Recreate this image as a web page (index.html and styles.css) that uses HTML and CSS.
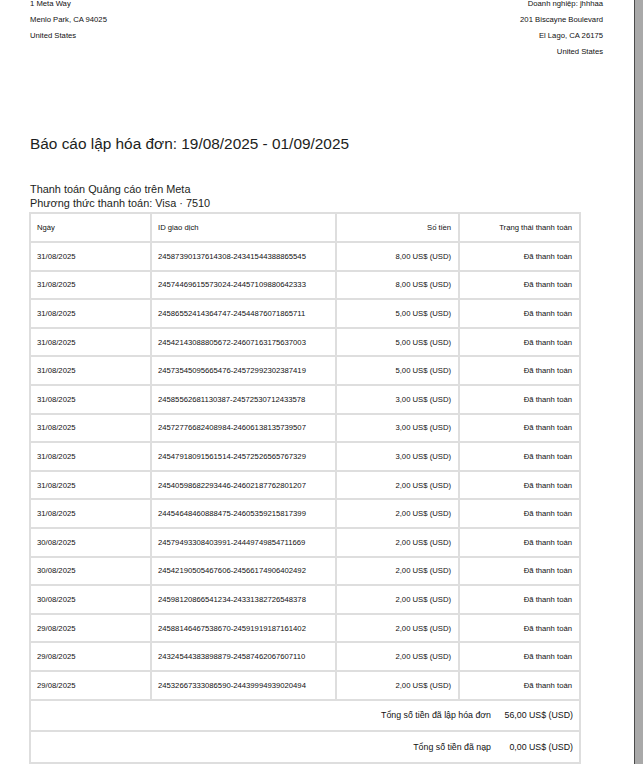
FILE: index.html
```html
<!DOCTYPE html>
<html lang="vi">
<head>
  <meta charset="UTF-8" />
  <meta name="viewport" content="width=device-width, initial-scale=1.0" />
  <title>Báo cáo lập hóa đơn</title>
  <link rel="stylesheet" href="styles.css">
</head>
<body>
  <div class="page">
    <header class="addresses">
      <div class="addr">
        <div>1 Meta Way</div>
        <div>Menlo Park, CA 94025</div>
        <div>United States</div>
      </div>
      <div class="addr addr-right">
        <div>Doanh nghiệp: jhhhaa</div>
        <div>201 Biscayne Boulevard</div>
        <div>El Lago, CA 26175</div>
        <div>United States</div>
      </div>
    </header>

    <h1>Báo cáo lập hóa đơn: 19/08/2025 - 01/09/2025</h1>

    <div class="sub">
      <div>Thanh toán Quảng cáo trên Meta</div>
      <div>Phương thức thanh toán: Visa · 7510</div>
    </div>

    <table class="tx">
      <colgroup>
        <col class="c-date"><col class="c-id"><col class="c-amt"><col class="c-status">
      </colgroup>
      <thead>
        <tr>
          <th>Ngày</th>
          <th>ID giao dịch</th>
          <th class="r">Số tiền</th>
          <th class="r">Trạng thái thanh toán</th>
        </tr>
      </thead>
      <tbody>
        <tr><td>31/08/2025</td><td>24587390137614308-24341544388865545</td><td class="r">8,00 US$ (USD)</td><td class="r">Đã thanh toán</td></tr>
        <tr><td>31/08/2025</td><td>24574469615573024-24457109880642333</td><td class="r">8,00 US$ (USD)</td><td class="r">Đã thanh toán</td></tr>
        <tr><td>31/08/2025</td><td>24586552414364747-24544876071865711</td><td class="r">5,00 US$ (USD)</td><td class="r">Đã thanh toán</td></tr>
        <tr><td>31/08/2025</td><td>24542143088805672-24607163175637003</td><td class="r">5,00 US$ (USD)</td><td class="r">Đã thanh toán</td></tr>
        <tr><td>31/08/2025</td><td>24573545095665476-24572992302387419</td><td class="r">5,00 US$ (USD)</td><td class="r">Đã thanh toán</td></tr>
        <tr><td>31/08/2025</td><td>24585562681130387-24572530712433578</td><td class="r">3,00 US$ (USD)</td><td class="r">Đã thanh toán</td></tr>
        <tr><td>31/08/2025</td><td>24572776682408984-24606138135739507</td><td class="r">3,00 US$ (USD)</td><td class="r">Đã thanh toán</td></tr>
        <tr><td>31/08/2025</td><td>24547918091561514-24572526565767329</td><td class="r">3,00 US$ (USD)</td><td class="r">Đã thanh toán</td></tr>
        <tr><td>31/08/2025</td><td>24540598682293446-24602187762801207</td><td class="r">2,00 US$ (USD)</td><td class="r">Đã thanh toán</td></tr>
        <tr><td>31/08/2025</td><td>24454648460888475-24605359215817399</td><td class="r">2,00 US$ (USD)</td><td class="r">Đã thanh toán</td></tr>
        <tr><td>30/08/2025</td><td>24579493308403991-24449749854711669</td><td class="r">2,00 US$ (USD)</td><td class="r">Đã thanh toán</td></tr>
        <tr><td>30/08/2025</td><td>24542190505467606-24566174906402492</td><td class="r">2,00 US$ (USD)</td><td class="r">Đã thanh toán</td></tr>
        <tr><td>30/08/2025</td><td>24598120866541234-24331382726548378</td><td class="r">2,00 US$ (USD)</td><td class="r">Đã thanh toán</td></tr>
        <tr><td>29/08/2025</td><td>24588146467538670-24591919187161402</td><td class="r">2,00 US$ (USD)</td><td class="r">Đã thanh toán</td></tr>
        <tr><td>29/08/2025</td><td>24324544383898879-24587462067607110</td><td class="r">2,00 US$ (USD)</td><td class="r">Đã thanh toán</td></tr>
        <tr><td>29/08/2025</td><td>24532667333086590-24439994939020494</td><td class="r">2,00 US$ (USD)</td><td class="r">Đã thanh toán</td></tr>
      </tbody>
      <tfoot>
        <tr>
          <td colspan="4">
            <div class="total">
              <span class="total-label">Tổng số tiền đã lập hóa đơn</span>
              <span class="total-value">56,00 US$ (USD)</span>
            </div>
          </td>
        </tr>
        <tr>
          <td colspan="4">
            <div class="total">
              <span class="total-label">Tổng số tiền đã nạp</span>
              <span class="total-value">0,00 US$ (USD)</span>
            </div>
          </td>
        </tr>
      </tfoot>
    </table>
  </div>
  <div class="scrollbar"></div>
</body>
</html>
```

FILE: styles.css
```css
* { margin: 0; padding: 0; box-sizing: border-box; }
html, body {
  width: 100%; height: 100%;
  overflow: hidden;
  background: #fff;
  color: #1c1e21;
  font-family: "Liberation Sans", Arial, sans-serif;
}
body { display: flex; }

.page {
  flex: 1;
  padding: 0 31px 0 30px;
}

.scrollbar {
  width: 9px;
  background: #a9a9a9;
  border-left: 1px solid #4b4b4b;
}

/* address block */
.addresses {
  display: flex;
  justify-content: space-between;
  align-items: flex-start;
  margin-top: -4px;
  font-size: 7.7px;
  line-height: 16px;
  color: #111;
}
.addr-right { text-align: right; }

h1 {
  margin-top: 75px;
  font-size: 15.4px;
  line-height: 18px;
  font-weight: normal;
}

.sub {
  margin-top: 29px;
  font-size: 10.9px;
  line-height: 14px;
}

/* transactions */
.tx {
  margin: 2px 0 0 -1px;
  width: 550px;
  border-collapse: collapse;
  table-layout: fixed;
  font-size: 7.7px;
  color: #111;
}
.c-date { width: 121px; }
.c-id { width: 185px; }
.c-amt { width: 123px; }
.c-status { width: 121px; }

.tx th, .tx td {
  border: 2px solid #dedede;
  padding: 0 6px;
  text-align: left;
  font-weight: normal;
  white-space: nowrap;
}
.tx th { height: 29px; }
.tx tbody td { height: 28.6px; }
.tx .r { text-align: right; padding-right: 7px; }

.tx tfoot td {
  height: 31.5px;
  padding: 0 6px 0 0;
}
.total {
  display: flex;
  justify-content: flex-end;
  gap: 9px;
  font-size: 8.8px;
}
.total-value {
  width: 73px;
  text-align: right;
}
```
